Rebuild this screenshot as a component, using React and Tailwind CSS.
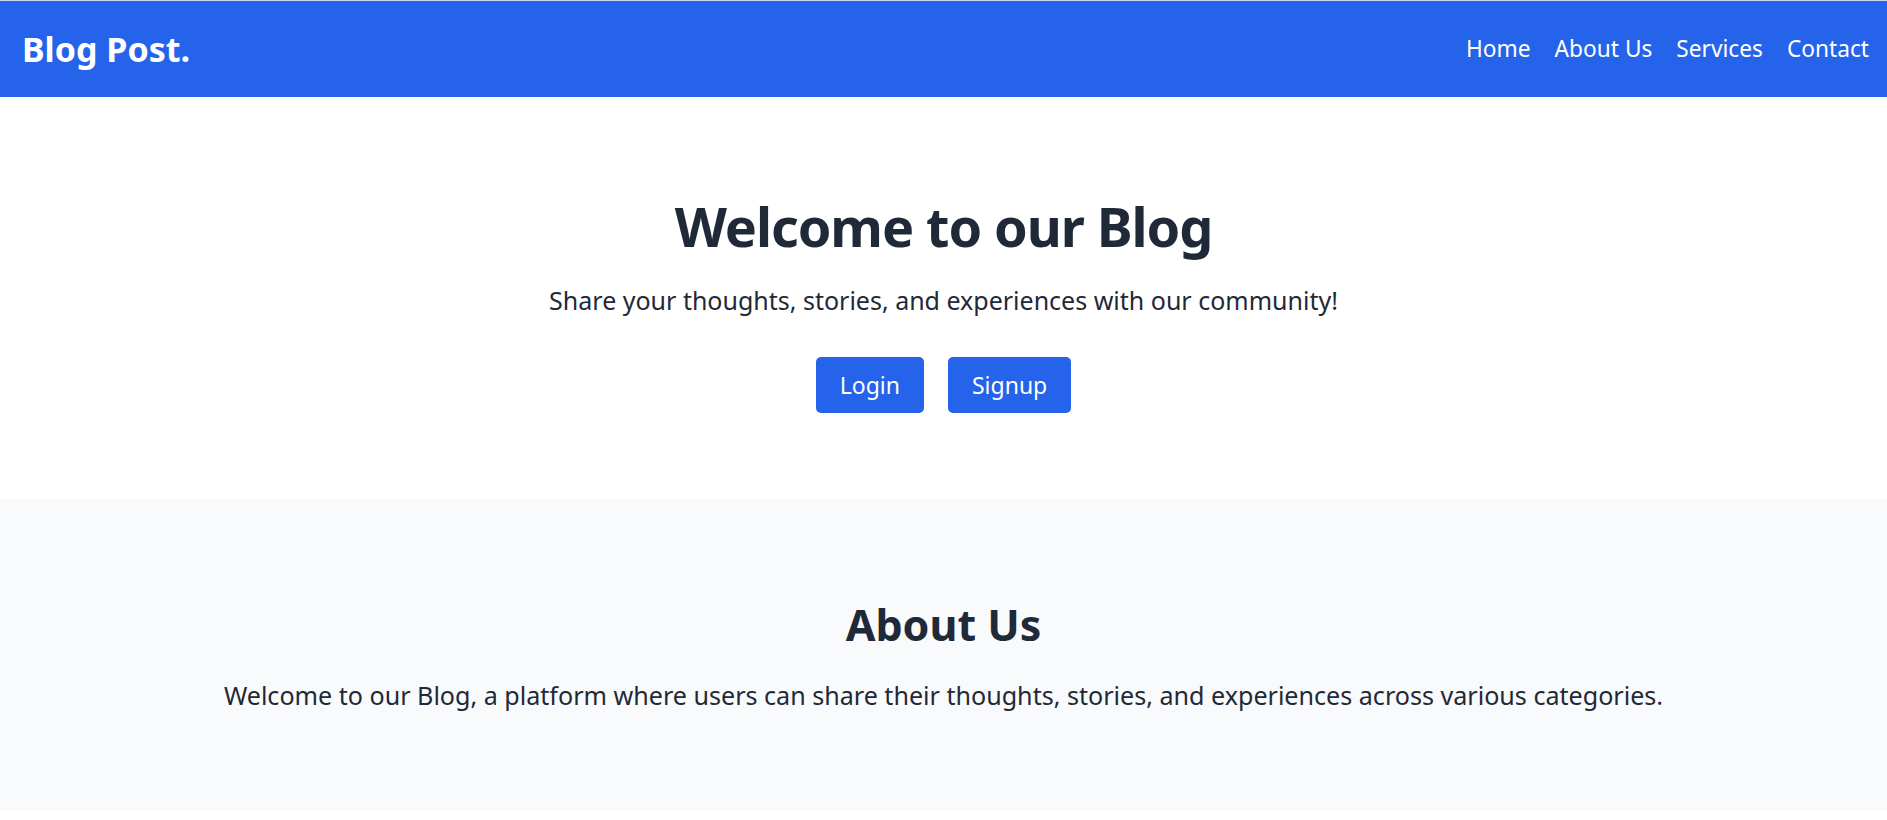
import React from 'react'

const navLinks = ['Home', 'About Us', 'Services', 'Contact']

const App = () => {
  return (
    <div className="min-h-screen bg-white text-[#1f2937] font-['Noto_Sans','Open_Sans',sans-serif]">
      {/* Navbar */}
      <header className="h-[97px] border-t border-[#c7d5f6] bg-[#2563eb] flex items-center justify-between pl-[22px] pr-[18px]">
        <a href="#" className="text-white font-bold text-[34px] leading-none">Blog Post.</a>
        <nav className="flex items-center gap-[24px]">
          {navLinks.map((link) => (
            <a key={link} href="#" className="text-white text-[22.7px] leading-none hover:underline">
              {link}
            </a>
          ))}
        </nav>
      </header>

      {/* Hero */}
      <section className="h-[402px] flex flex-col items-center pt-[97px] text-center">
        <h1 className="text-[54px] leading-[64px] tracking-[-0.02em] font-bold">Welcome to our Blog</h1>
        <p className="mt-[26px] text-[25px] leading-[32px]">
          Share your thoughts, stories, and experiences with our community!
        </p>
        <div className="mt-[41px] flex gap-[24px]">
          <button className="h-[56px] px-[24px] bg-[#2563eb] text-white text-[23px] rounded-[5px] hover:bg-blue-700">
            Login
          </button>
          <button className="h-[56px] px-[24px] bg-[#2563eb] text-white text-[23px] rounded-[5px] hover:bg-blue-700">
            Signup
          </button>
        </div>
      </section>

      {/* About */}
      <section className="h-[312px] bg-[#f9fafb] flex flex-col items-center pt-[100px] text-center">
        <h2 className="text-[43px] leading-[52px] font-bold">About Us</h2>
        <p className="mt-[28px] text-[25.1px] leading-[32px]">
          Welcome to our Blog, a platform where users can share their thoughts, stories, and experiences across various categories.
        </p>
      </section>
    </div>
  )
}

export default App
